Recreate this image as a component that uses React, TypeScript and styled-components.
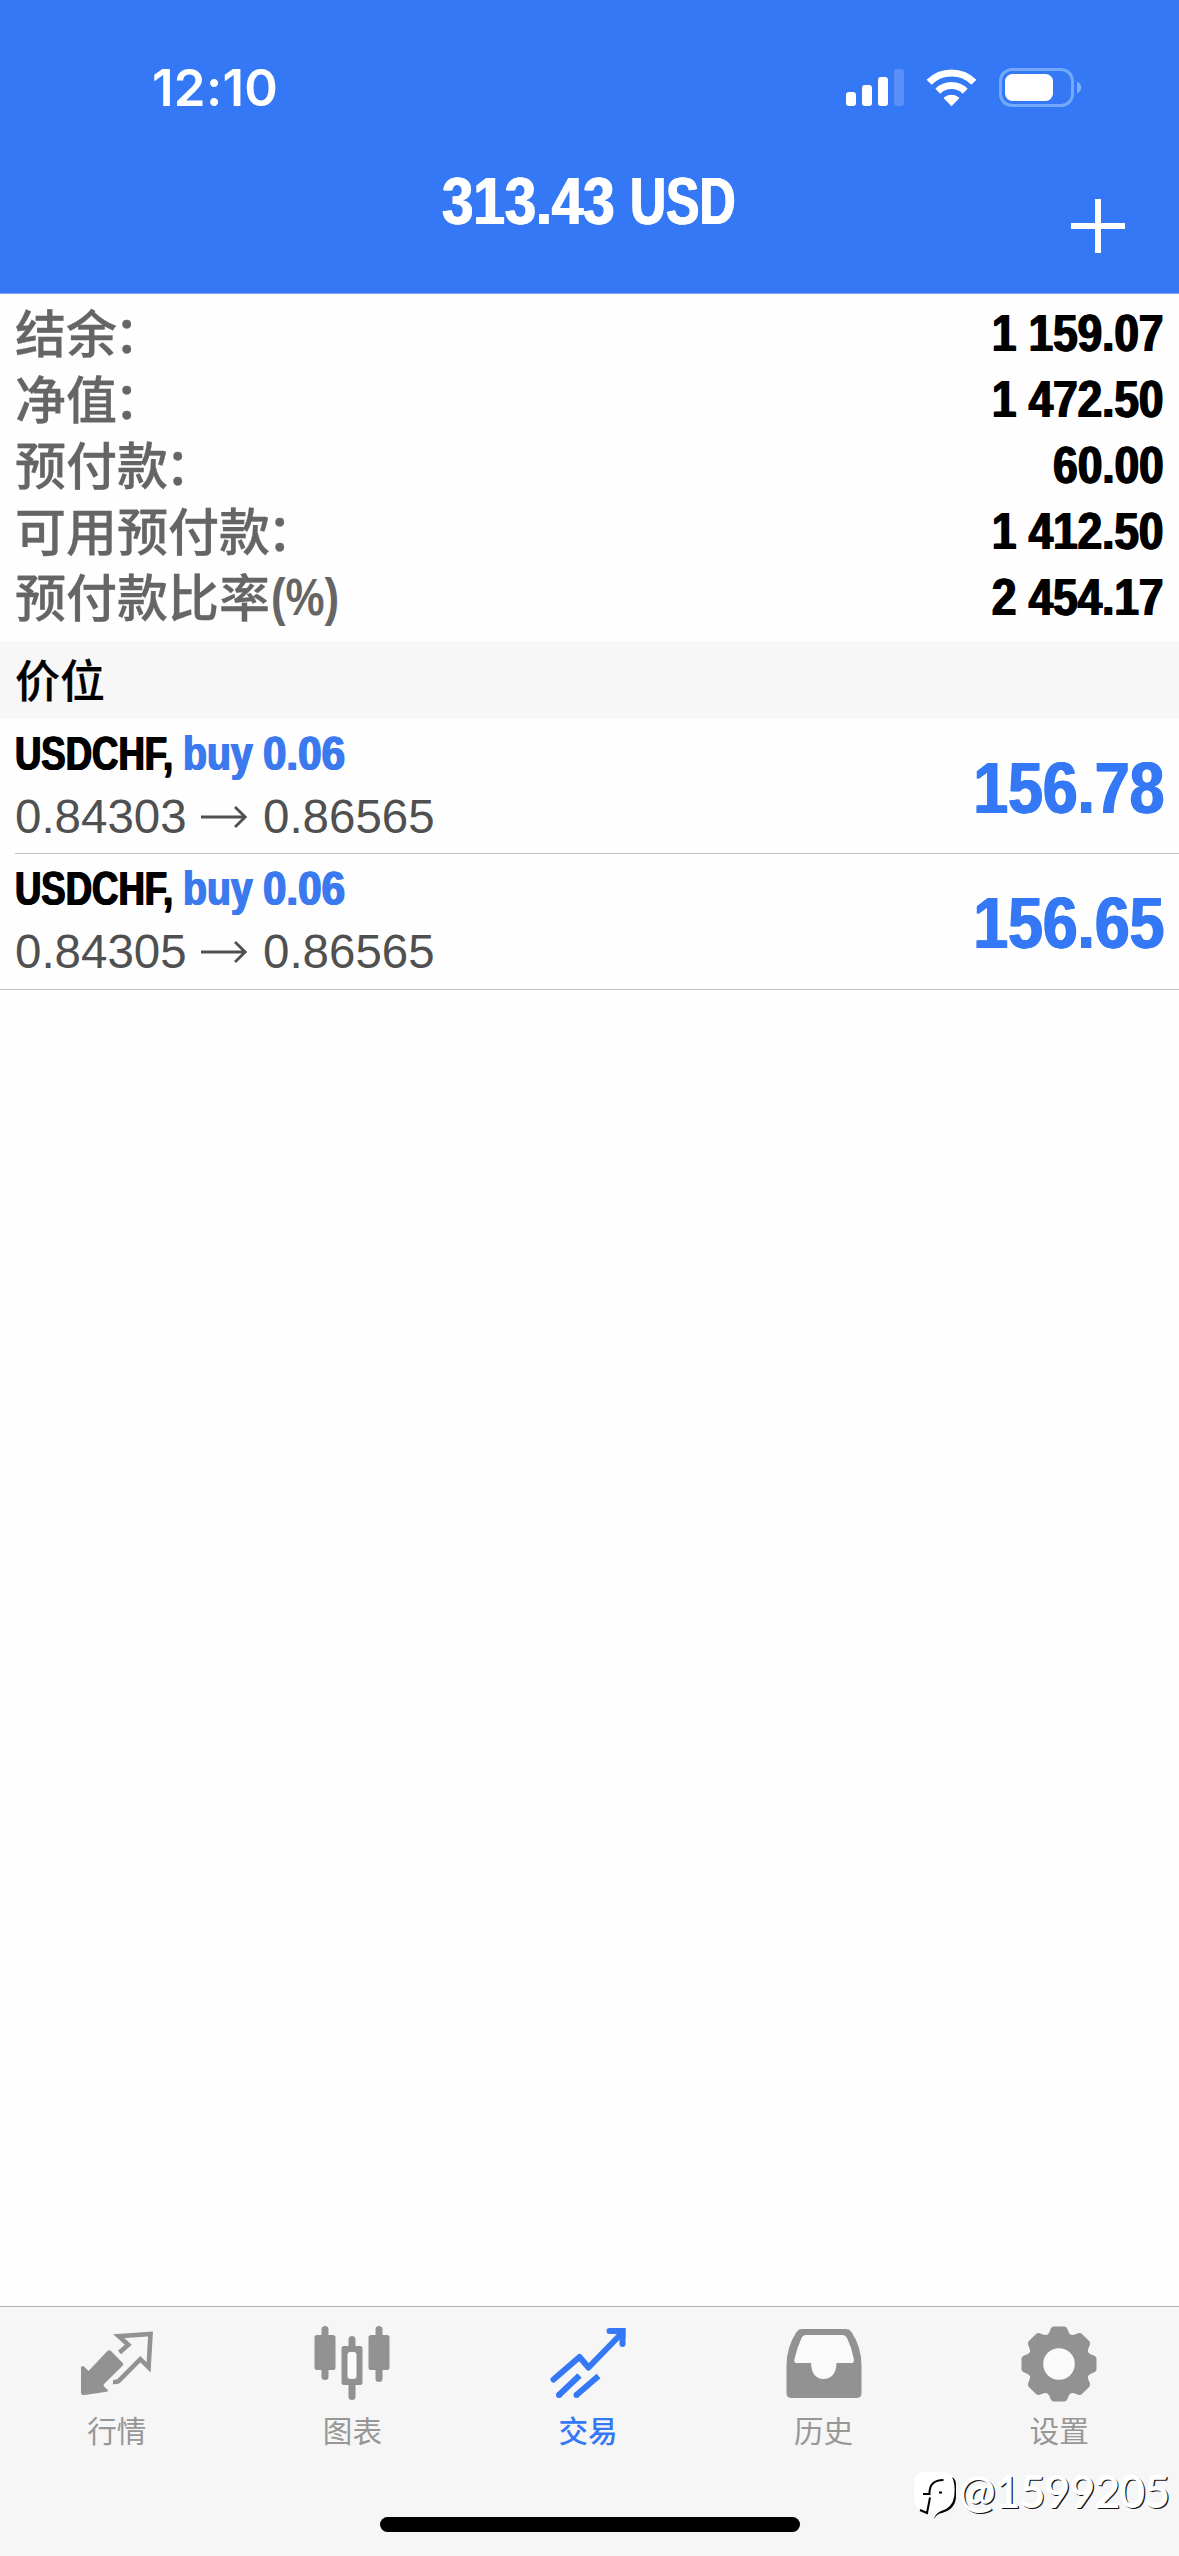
import React from 'react';
import styled, { createGlobalStyle } from 'styled-components';

const BLUE = '#3478f6';
const GREY = '#929292';
const CJK = '"Noto Sans CJK SC", "Noto Sans", sans-serif';
const SANS = '"Liberation Sans", Arial, sans-serif';

const Global = createGlobalStyle`
  * { box-sizing: border-box; }
  html, body { margin: 0; padding: 0; background: #fefefe; }
  body { font-family: ${SANS}; }
  svg { display: block; }
`;

const Screen = styled.div`
  position: relative;
  width: 1179px;
  height: 2556px;
  display: flex;
  flex-direction: column;
  overflow: hidden;
  background: #fefefe;
`;

const Header = styled.header`
  height: 294px;
  flex: none;
  background: ${BLUE};
  border-bottom: 1px solid #7ba5ee;
  color: #fff;
`;

const StatusBar = styled.div`
  height: 140px;
  padding: 35px 97px 0 152px;
  display: flex;
  justify-content: space-between;
`;

const Clock = styled.div`
  height: 106px;
  font: 600 51px/106px Inter, sans-serif;
  letter-spacing: 0.3px;
`;

const StatusIcons = styled.div`
  padding-top: 33px;
`;

const NavBar = styled.div`
  display: grid;
  grid-template-columns: 1fr 300px 1fr;
  height: 153px;
  padding-right: 54px;
  padding-left: 54px;
`;

const NavTitle = styled.h1`
  grid-column: 2;
  margin: 0;
  padding: 20px 0 0 2px;
  display: flex;
  line-height: 82px;
  height: 104px;
`;

const AddButton = styled.button`
  justify-self: end;
  margin: 59px 0 0;
  width: 54px;
  height: 54px;
  padding: 0;
  border: 0;
  background: none;
`;

const Condensed = styled.span<{ $size: number; $scale: number; $width?: number; $end?: boolean; $weight?: number }>`
  display: inline-block;
  flex: none;
  width: ${p => (p.$width ? `${p.$width}px` : 'auto')};
  font-family: ${SANS};
  font-weight: bold;
  font-size: ${p => p.$size}px;
  white-space: nowrap;
  transform: scaleX(${p => p.$scale});
  transform-origin: ${p => (p.$end ? 'right' : 'left')} center;
  text-shadow: ${p => p.$weight ?? 1}px 0 0 currentColor, -${p => p.$weight ?? 1}px 0 0 currentColor;
`;

const Summary = styled.section`
  height: 347px;
  flex: none;
  padding: 6px 15px 0 15px;
`;

const SummaryRow = styled.div`
  height: 66px;
  display: flex;
  justify-content: space-between;
  line-height: 68px;
`;

const SummaryLabel = styled.span`
  display: flex;
  font-family: ${CJK};
  font-weight: 500;
  font-size: 51px;
  line-height: 62px;
  color: #656565;
  -webkit-text-stroke: 0.3px #656565;
`;

const Colon = styled.span`
  margin-left: -3px;
`;

const Unit = styled.span`
  display: inline-block;
  margin-left: 1px;
  font-family: ${SANS};
  font-weight: bold;
  line-height: 68px;
  transform: scaleX(0.86);
  transform-origin: left center;
  -webkit-text-stroke: 0;
`;

const SectionTitle = styled.h2`
  height: 78px;
  flex: none;
  margin: 0;
  padding-left: 15px;
  background: #f7f7f7;
  font: 500 45px/76px ${CJK};
  color: #000;
  -webkit-text-stroke: 0.2px #000;
`;

const Position = styled.article<{ $last?: boolean }>`
  height: ${p => (p.$last ? 136 : 135)}px;
  flex: none;
  margin-left: ${p => (p.$last ? 0 : 15)}px;
  padding: 0 15px 0 ${p => (p.$last ? 15 : 0)}px;
  border-bottom: 1px solid #c4c4c4;
  display: flex;
  justify-content: space-between;
`;

const PositionInfo = styled.div`
  display: flex;
  flex-direction: column;
`;

const Deal = styled.div`
  display: flex;
  height: 70px;
  line-height: 69px;
  color: #000;
`;

const Side = styled.span`
  display: flex;
  color: #3a79ee;
`;

const Prices = styled.div`
  display: flex;
  align-items: center;
  height: 56px;
  font-size: 47.5px;
  line-height: 56px;
  color: #505050;
`;

const Price = styled.span<{ $width: number }>`
  width: ${p => p.$width}px;
  white-space: nowrap;
`;

const ArrowBox = styled.span`
  width: 62px;
`;

const Profit = styled.div`
  line-height: 138px;
  height: 134px;
  color: ${BLUE};
`;

const Filler = styled.div`
  flex: 1;
`;

const TabBar = styled.nav`
  height: 250px;
  flex: none;
  display: grid;
  grid-template-columns: repeat(5, 235.6px);
  align-content: start;
  margin-left: -1px;
  background: #f6f6f6;
  border-top: 1px solid #b0b0b0;
`;

const Tab = styled.div<{ $active?: boolean }>`
  display: flex;
  flex-direction: column;
  align-items: center;
  padding-top: 19px;
  color: ${p => (p.$active ? BLUE : GREY)};
`;

const TabLabel = styled.span<{ $active?: boolean }>`
  height: 44px;
  margin-top: 6px;
  font: ${p => (p.$active ? 500 : 400)} 29.6px/44px ${CJK};
  color: ${p => (p.$active ? BLUE : '#979797')};
`;

const HomeIndicator = styled.div`
  position: absolute;
  left: 380px;
  bottom: 24px;
  width: 420px;
  height: 15px;
  border-radius: 8px;
  background: #000;
`;

const Watermark = styled.div`
  position: absolute;
  left: 913px;
  top: 2466px;
  display: flex;
  align-items: center;
  height: 56px;
`;

const WatermarkText = styled.span`
  height: 56px;
  margin-left: 2px;
  font: 400 44px/51px Lato, sans-serif;
  letter-spacing: -0.6px;
  color: #fff;
  text-shadow: -1px -1px 0 #fff, 1.2px 1.2px 0 #111;
`;

const StatusGlyphs = () => (
  <svg width="236" height="40" viewBox="0 0 236 40" fill="#fff">
    <rect x="0" y="24" width="10" height="14" rx="3" />
    <rect x="16" y="17" width="10" height="21" rx="3" />
    <rect x="32" y="9" width="10" height="29" rx="3" />
    <rect x="48" y="1" width="10" height="37" rx="3" opacity=".18" />
    <g fill="none" stroke="#fff" strokeWidth="7">
      <path d="M83.1 14.3A31.7 31.7 0 0 1 127.9 14.3" />
      <path d="M91.8 23.2A19.6 19.6 0 0 1 119.2 23.2" />
    </g>
    <path d="M105.5 38.3L98 30.5Q97.500 29.700 98.300 29.200Q105.500 24.300 112.700 29.200Q113.500 29.700 113 30.500Z" />
    <rect x="154.500" y="1.500" width="72" height="36" rx="11.500" fill="none" stroke="#72a9fb" strokeWidth="3" />
    <rect x="159" y="6" width="48" height="27" rx="7.500" />
    <path d="M231 13.500Q235.200 15.600 235.200 19.500Q235.200 23.400 231 25.500Z" fill="#79b0fb" />
  </svg>
);

const Arrow = () => (
  <svg width="46" height="24" viewBox="0 0 46 24" fill="none" stroke="#505050" strokeWidth="2.800">
    <path d="M0 12H44M34 2L44.200 12L34 22" />
  </svg>
);

const QuotesIcon = () => (
  <svg width="76" height="76" viewBox="0 0 76 76">
    <path
      d="M28.500 25Q30.500 23.600 32.200 25.200L44 37.200Q44.600 38.500 43.800 39.500L25.500 57.500Q23.500 59.500 25.500 61L29 64Q29 65.500 27.500 65.800L6 69Q2 69.500 2 66.500V41.500Q2.500 39 5 40.500L9.500 45Z"
      fill="currentColor"
    />
    <path
      d="M40.500 26.500L49.300 18.700L39.800 10.200L71.500 8L69.600 41.300L61.300 33.200L39.500 55.200Q38 56.300 34 56"
      fill="none"
      stroke="currentColor"
      strokeWidth="4.600"
      strokeLinejoin="miter"
    />
  </svg>
);

const ChartsIcon = () => (
  <svg width="76" height="76" viewBox="0 0 76 76" fill="currentColor">
    <rect x="7.500" y="0" width="7" height="54" rx="3.500" />
    <rect x="0.500" y="9" width="21" height="35" rx="2.500" />
    <rect x="61.500" y="0" width="7" height="56" rx="3.500" />
    <rect x="54.500" y="9" width="21" height="35" rx="2.500" />
    <rect x="34.500" y="10" width="7" height="64" rx="3.500" />
    <rect x="27.500" y="20" width="21" height="39" rx="2.500" />
    <rect x="33.500" y="26" width="9" height="27" rx="3" fill="#fbfbfb" />
  </svg>
);

const TradeIcon = () => (
  <svg width="76" height="76" viewBox="0 0 76 76" fill="none" stroke="currentColor" strokeWidth="6">
    <path d="M3.500 53.500L29.500 31L38.500 41.500L71 8" strokeLinecap="round" strokeLinejoin="round" />
    <path d="M59.500 5H72.500V18" strokeLinecap="round" />
    <path d="M66 2H75.500V12Z" fill="currentColor" stroke="none" />
    <path d="M9 69L29.500 49.500M26.500 69L48.500 50" />
    <path d="M9 69h.01M26.500 69h.01" strokeLinecap="round" />
  </svg>
);

const HistoryIcon = () => (
  <svg width="76" height="76" viewBox="0 0 76 76">
    <path
      d="M15.500 3H60.500Q63.500 3 65.500 6Q75.500 21 75.500 40V67Q75.500 72 70.500 72H5.500Q.500 72 .500 67V40Q.500 21 10.500 6Q12.500 3 15.500 3Z"
      fill="currentColor"
    />
    <path
      d="M20 9H56Q59.500 9 61 12Q66 22 67.800 33Q68.500 37 65.500 37H50.500Q50 52.500 37.500 53Q25.500 52.500 25 37H10.500Q7.500 37 8.500 33Q11 22 15.500 12Q17 9 20 9Z"
      fill="#fafafa"
    />
  </svg>
);

const SettingsIcon = () => (
  <svg width="76" height="76" viewBox="0 0 76 76">
    <g fill="currentColor">
      <circle cx="38" cy="38" r="30" />
      {[0, 45, 90, 135, 180, 225, 270, 315].map(angle => (
        <path
          key={angle}
          transform={`rotate(${angle} 38 38)`}
          d="M24 10Q27.500 9 29 4.500Q30.200 .500 33 .500H43Q45.800 .500 47 4.500Q48.500 9 52 10V18H24Z"
        />
      ))}
    </g>
    <circle cx="38" cy="38" r="15.800" fill="#fafafa" />
  </svg>
);

const WatermarkLogo = () => (
  <svg width="44" height="54" viewBox="0 0 44 54">
    <path d="M13 5H29Q43 6 42.500 20V28Q42 44 27 45.500Q23 47 21.500 51V45L14 45Q1 44 1 30V18Q1 5 13 5Z" fill="#fff" />
    <path d="M10 27H16.500Q16 13 30.500 13M17 30.500L14 46L7 43M26 25.500H29" fill="none" stroke="#000" strokeWidth="2" />
    <path
      d="M39 10Q42.600 16 41.300 29Q39.500 41.500 27 44.500Q22 47 21 52Q24 46.500 29 46Q43 42 43 29V18Q43 12 39 10Z"
      fill="#000"
    />
  </svg>
);

const summary = [
  { label: '结余', value: '1 159.07' },
  { label: '净值', value: '1 472.50' },
  { label: '预付款', value: '60.00' },
  { label: '可用预付款', value: '1 412.50' },
  { label: '预付款比率', unit: '(%)', value: '2 454.17' },
];

const positions = [
  { open: '0.84303', current: '0.86565', profit: '156.78' },
  { open: '0.84305', current: '0.86565', profit: '156.65' },
];

const tabs = [
  { label: '行情', Icon: QuotesIcon },
  { label: '图表', Icon: ChartsIcon },
  { label: '交易', Icon: TradeIcon, active: true },
  { label: '历史', Icon: HistoryIcon },
  { label: '设置', Icon: SettingsIcon },
];

export default function App() {
  return (
    <Screen>
      <Global />
      <Header>
        <StatusBar>
          <Clock>12:10</Clock>
          <StatusIcons>
            <StatusGlyphs />
          </StatusIcons>
        </StatusBar>
        <NavBar>
          <NavTitle>
            <Condensed $size={66} $scale={0.855} $width={188}>313.43</Condensed>
            <Condensed $size={66} $scale={0.757} $width={108}>USD</Condensed>
          </NavTitle>
          <AddButton aria-label="+">
            <svg width="54" height="54" viewBox="0 0 54 54">
              <path d="M0 27H54M27 0V54" stroke="#fff" strokeWidth="6" />
            </svg>
          </AddButton>
        </NavBar>
      </Header>
      <Summary>
        {summary.map(row => (
          <SummaryRow key={row.label}>
            <SummaryLabel>
              {row.label}
              {row.unit ? <Unit>{row.unit}</Unit> : <Colon>：</Colon>}
            </SummaryLabel>
            <Condensed $size={51} $scale={0.865} $end>{row.value}</Condensed>
          </SummaryRow>
        ))}
      </Summary>
      <SectionTitle>价位</SectionTitle>
      {positions.map((p, i) => (
        <Position key={p.profit} $last={i === positions.length - 1}>
          <PositionInfo>
            <Deal>
              <Condensed $size={49} $scale={0.745} $width={168}>USDCHF,</Condensed>
              <Side>
                <Condensed $size={49} $scale={0.8} $width={80}>buy</Condensed>
                <Condensed $size={49} $scale={0.86}>0.06</Condensed>
              </Side>
            </Deal>
            <Prices>
              <Price $width={186}>{p.open}</Price>
              <ArrowBox>
                <Arrow />
              </ArrowBox>
              <Price $width={172}>{p.current}</Price>
            </Prices>
          </PositionInfo>
          <Profit>
            <Condensed $size={73} $scale={0.855} $end>{p.profit}</Condensed>
          </Profit>
        </Position>
      ))}
      <Filler />
      <TabBar>
        {tabs.map(({ label, Icon, active }) => (
          <Tab key={label} $active={active}>
            <Icon />
            <TabLabel $active={active}>{label}</TabLabel>
          </Tab>
        ))}
      </TabBar>
      <HomeIndicator />
      <Watermark>
        <WatermarkLogo />
        <WatermarkText>@1599205</WatermarkText>
      </Watermark>
    </Screen>
  );
}
